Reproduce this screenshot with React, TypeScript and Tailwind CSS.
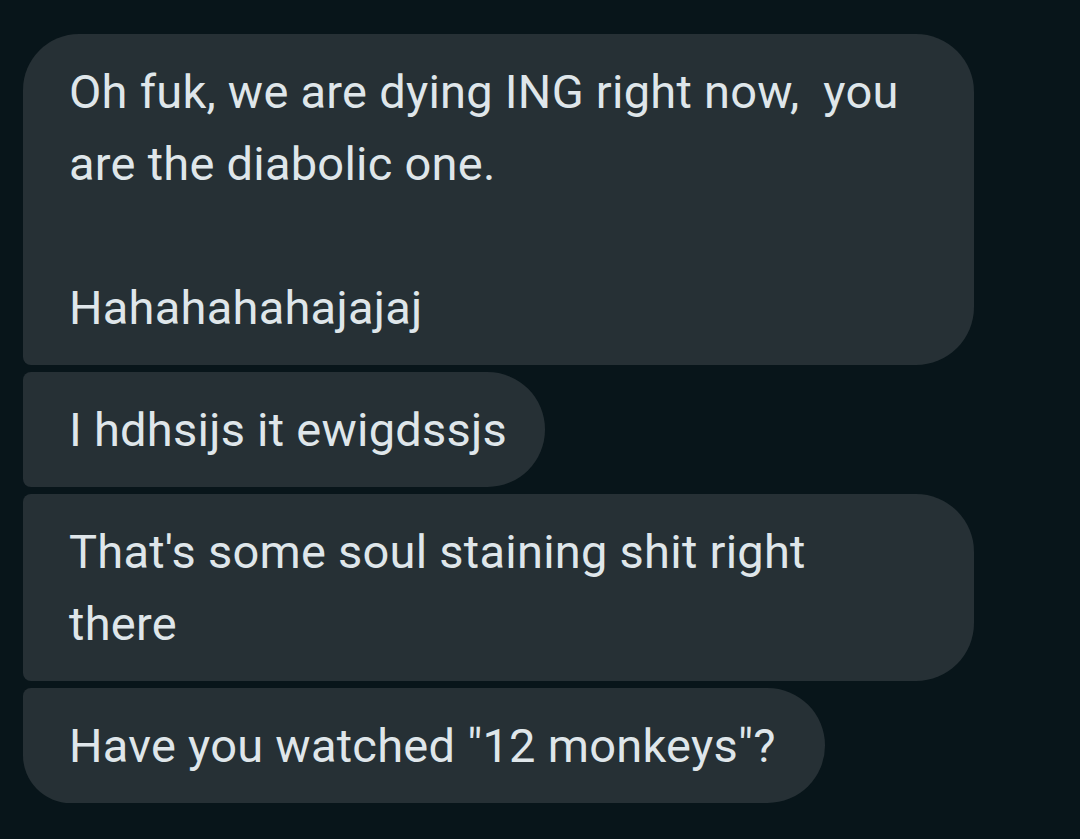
import React from 'react';

type Bubble = {
    lines: string[];
    wide?: boolean;
    corners: string;
    pr: string;
};

const bubbles: Bubble[] = [
    {
        lines: ['Oh fuk, we are dying ING right now,\u00a0 you', 'are the diabolic one.', '\u00a0', 'Hahahahahajajaj'],
        wide: true,
        corners: 'rounded-tl-[56px] rounded-tr-[58px] rounded-br-[58px] rounded-bl-[8px]',
        pr: 'pr-[48px]',
    },
    {
        lines: ['I hdhsijs it ewigdssjs'],
        corners: 'rounded-tl-[8px] rounded-bl-[8px] rounded-tr-[58px] rounded-br-[58px]',
        pr: 'pr-[38px]',
    },
    {
        lines: ["That's some soul staining shit right", 'there'],
        wide: true,
        corners: 'rounded-tl-[8px] rounded-bl-[8px] rounded-tr-[58px] rounded-br-[58px]',
        pr: 'pr-[48px]',
    },
    {
        lines: ['Have you watched "12 monkeys"?'],
        corners: 'rounded-tl-[8px] rounded-bl-[48px] rounded-tr-[58px] rounded-br-[58px]',
        pr: 'pr-[49px]',
    },
];

export default function App() {
    return (
        <div
            className="w-[1080px] h-[839px] bg-[#08151a] overflow-hidden pt-[34px] pl-[23px]"
            style={{ fontFamily: 'Roboto, "Noto Sans", sans-serif' }}
        >
            <div className="flex flex-col items-start gap-[7px]">
                {bubbles.map((b, i) => (
                    <div
                        key={i}
                        className={`bg-[#263035] text-[#dfe6ea] text-[47px] leading-[72px] tracking-[0.25px] pl-[46px] pt-[22px] pb-[21px] whitespace-nowrap ${b.pr} ${b.wide ? 'w-[951px]' : 'w-fit'} ${b.corners}`}
                    >
                        {b.lines.map((l, j) => (
                            <div key={j}>{l}</div>
                        ))}
                    </div>
                ))}
            </div>
        </div>
    );
}
